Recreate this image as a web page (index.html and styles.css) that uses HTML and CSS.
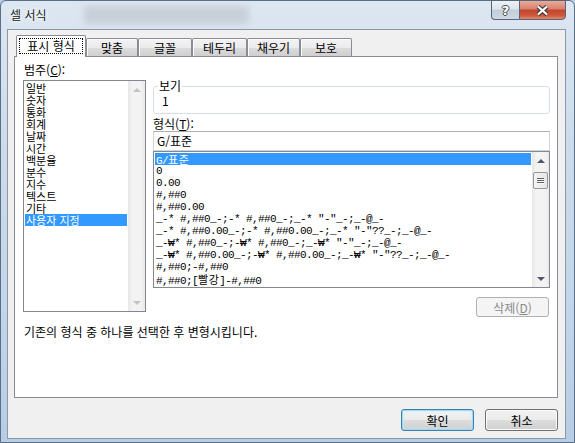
FILE: index.html
```html
<!DOCTYPE html>
<html lang="ko">
<head>
  <meta charset="UTF-8">
  <meta name="viewport" content="width=device-width, initial-scale=1.0">
  <title>셀 서식</title>
  <link rel="stylesheet" href="styles.css">
</head>
<body>
  <div class="window">
    <div class="titlebar">
      <span class="title">셀 서식</span>
      <span class="glass-blur"></span>
      <div class="caption-buttons">
        <span class="cap-btn help">?</span>
        <span class="cap-btn close">
          <svg width="13" height="11" viewBox="0 0 13 11">
            <path d="M2 1.5L11 9.5M11 1.5L2 9.5" stroke="#3d3d3d" stroke-width="4.4" fill="none"/>
            <path d="M2 1.5L11 9.5M11 1.5L2 9.5" stroke="#fff" stroke-width="2.2" fill="none"/>
          </svg>
        </span>
      </div>
    </div>

    <div class="client">
      <div class="tabs">
        <div class="tab active"><span class="focus">표시 형식</span></div>
        <div class="tab t52">맞춤</div>
        <div class="tab t54">글꼴</div>
        <div class="tab t55">테두리</div>
        <div class="tab t53">채우기</div>
        <div class="tab t52">보호</div>
      </div>

      <div class="panel">
        <div class="columns">
          <div class="category">
            <div class="label">범주(<u>C</u>):</div>
            <div class="listbox cat-list">
              <ul class="items">
                <li>일반</li>
                <li>숫자</li>
                <li>통화</li>
                <li>회계</li>
                <li>날짜</li>
                <li>시간</li>
                <li>백분율</li>
                <li>분수</li>
                <li>지수</li>
                <li>텍스트</li>
                <li>기타</li>
                <li class="selected">사용자 지정</li>
              </ul>
              <div class="scrollbar disabled">
                <span class="sb-btn"><span class="arrow up"></span></span>
                <span class="sb-fill"></span>
                <span class="sb-btn"><span class="arrow down"></span></span>
              </div>
            </div>
          </div>

          <div class="format">
            <fieldset class="sample">
              <legend>보기</legend>
              <div class="sample-value">1</div>
            </fieldset>
            <div class="label">형식(<u>T</u>):</div>
            <div class="textbox">G/표준</div>
            <div class="listbox fmt-list">
              <ul class="items mono">
                <li class="selected">G/<span class="ko">표준</span></li>
                <li>0</li>
                <li>0.00</li>
                <li>#,##0</li>
                <li>#,##0.00</li>
                <li>_-* #,##0_-;-* #,##0_-;_-* "-"_-;_-@_-</li>
                <li>_-* #,##0.00_-;-* #,##0.00_-;_-* "-"??_-;_-@_-</li>
                <li>_-₩* #,##0_-;-₩* #,##0_-;_-₩* "-"_-;_-@_-</li>
                <li>_-₩* #,##0.00_-;-₩* #,##0.00_-;_-₩* "-"??_-;_-@_-</li>
                <li>#,##0;-#,##0</li>
                <li>#,##0;[<span class="ko">빨강</span>]-#,##0</li>
              </ul>
              <div class="scrollbar">
                <span class="sb-btn"><span class="arrow up"></span></span>
                <span class="thumb"><span class="grip"></span></span>
                <span class="sb-fill"></span>
                <span class="sb-btn"><span class="arrow down"></span></span>
              </div>
            </div>
            <div class="actions">
              <button class="btn small" disabled>삭제(<u>D</u>)</button>
            </div>
          </div>
        </div>
        <p class="hint">기존의 형식 중 하나를 선택한 후 변형시킵니다.</p>
      </div>

      <div class="footer">
        <button class="btn default">확인</button>
        <button class="btn">취소</button>
      </div>
    </div>
  </div>
</body>
</html>
```

FILE: styles.css
```css
body {
  margin: 0;
  width: 575px;
  height: 443px;
  overflow: hidden;
  font-family: "Noto Sans CJK KR", "Noto Sans", sans-serif;
  font-size: 12px;
  color: #000;
  background: #b9cde4;
}

.window {
  box-sizing: border-box;
  width: 575px;
  height: 443px;
  border: 1px solid #5a6e85;
  border-radius: 6px 6px 0 0;
  background: linear-gradient(#dde7f2, #cddcec 30%, #c3d5e9 70%, #b7cce5);
  padding: 0 8px 3px 6px;
  display: flex;
  flex-direction: column;
}

/* title bar */
.titlebar {
  height: 28px;
  display: flex;
  align-items: flex-start;
}

.title {
  margin: 6px 0 0 3px;
  line-height: 16px;
  color: #1b1b1b;
  text-shadow: 0 0 6px #fff, 0 0 3px #fff;
}

.glass-blur {
  width: 165px;
  height: 18px;
  margin: 5px 0 0 38px;
  background: #c4cad2;
  filter: blur(3px);
  opacity: 0.8;
}

.caption-buttons {
  display: flex;
  margin: -1px 0 0 auto;
}

.cap-btn {
  box-sizing: border-box;
  height: 20px;
  border: 1px solid #56657a;
  display: flex;
  align-items: center;
  justify-content: center;
}

.help {
  width: 28px;
  border-right: none;
  border-radius: 0 0 0 4px;
  background: linear-gradient(#edf1f6, #dbe3ec 45%, #c3cedb 50%, #cdd8e4);
  font-family: "DejaVu Sans", sans-serif;
  font-weight: bold;
  font-size: 13px;
  color: #fff;
  text-shadow: 1px 0 #4a4a4a, -1px 0 #4a4a4a, 0 1px #4a4a4a, 0 -1px #4a4a4a;
}

.close {
  width: 47px;
  border-radius: 0 0 4px 0;
  background: linear-gradient(#e9ab9c, #d8806c 45%, #c4452b 50%, #d0573b 80%, #e28a6c);
}

/* client area */
.client {
  flex: 1;
  border: 1px solid #8b98a8;
  background: #f0f0f0;
  padding: 0 7px 0 6px;
  display: flex;
  flex-direction: column;
}

.tabs {
  display: flex;
  align-items: flex-end;
  height: 26px;
  padding-left: 2px;
}

.tab {
  box-sizing: border-box;
  height: 18px;
  border: 1px solid #898c95;
  border-bottom: none;
  border-radius: 2px 2px 0 0;
  background: linear-gradient(#f3f3f3, #ebebeb 50%, #dddddd 50%, #cfcfcf);
  box-shadow: inset 1px 1px 0 #fbfbfb;
  text-align: center;
  line-height: 17px;
}

.t52 { width: 52px; }
.t53 { width: 53px; }
.t54 { width: 54px; }
.t55 { width: 55px; }

.tab.active {
  width: 70px;
  height: 22px;
  margin-bottom: -1px;
  position: relative;
  z-index: 1;
  background: #fff;
  box-shadow: none;
  padding-top: 2px;
}

.focus {
  display: block;
  height: 16px;
  margin: 0 2px;
  border: 1px dotted #000;
  box-sizing: border-box;
  line-height: 14px;
}

.panel {
  box-sizing: border-box;
  height: 342px;
  border: 1px solid #898c95;
  background: #fff;
  padding: 6px 7px 0 8px;
}

.columns {
  display: flex;
  gap: 7px;
}

.category {
  width: 123px;
}

.format {
  flex: 1;
  min-width: 0;
}

.label {
  height: 14px;
  line-height: 14px;
  padding-left: 1px;
}

/* list boxes */
.listbox {
  box-sizing: border-box;
  border: 1px solid #828790;
  background: #fff;
  display: flex;
  overflow: hidden;
}

.cat-list {
  height: 232px;
  margin-top: 3px;
  font-size: 11px;
}

.items {
  flex: 1;
  min-width: 0;
  list-style: none;
  margin: 0;
  padding: 1px 1px 0 1px;
  overflow: hidden;
}

.items li {
  height: 12px;
  line-height: 12px;
  padding-left: 1px;
  white-space: nowrap;
}

.items li.selected {
  background: #3399ff;
  color: #fff;
}

.mono {
  font-family: "Liberation Mono", "DejaVu Sans Mono", monospace;
  font-size: 11px;
  letter-spacing: -0.6px;
}

.ko {
  font-family: "Noto Sans CJK KR", sans-serif;
  font-size: 11px;
  letter-spacing: 0.5px;
}

.scrollbar {
  width: 17px;
  display: flex;
  flex-direction: column;
  background: linear-gradient(to right, #e6e6e6, #f3f3f3 25%, #f3f3f3 75%, #e9e9e9);
}

.sb-btn {
  height: 17px;
  display: flex;
  align-items: center;
  justify-content: center;
}

.sb-fill {
  flex: 1;
}

.arrow {
  width: 0;
  height: 0;
  border-left: 4px solid transparent;
  border-right: 4px solid transparent;
}

.arrow.up { border-bottom: 4px solid #4f5866; }
.arrow.down { border-top: 4px solid #4f5866; }

.disabled .arrow.up { border-bottom-color: #c3c3c3; }
.disabled .arrow.down { border-top-color: #c3c3c3; }

.thumb {
  box-sizing: border-box;
  height: 17px;
  margin: 3px 1px 0;
  border: 1px solid #979797;
  border-radius: 2px;
  background: linear-gradient(to right, #f4f4f4, #e6e6e6);
  display: flex;
  align-items: center;
  justify-content: center;
}

.grip {
  width: 7px;
  height: 6px;
  background: repeating-linear-gradient(#5f5f5f 0 1px, #fafafa 1px 2px);
}

/* right column */
.sample {
  margin: 17px 0 0;
  padding: 3px 8px 6px;
  border: 1px solid #d5dfe5;
  border-radius: 3px;
  min-width: 0;
}

.sample legend {
  padding: 0 1px;
  margin-left: -4px;
  line-height: 12px;
}

.sample-value {
  line-height: 12px;
}

.format .label {
  margin-top: 3px;
  padding-left: 0;
}

.textbox {
  box-sizing: border-box;
  height: 20px;
  border: 1px solid #d0d4da;
  border-top-color: #abadb3;
  padding-left: 3px;
  line-height: 18px;
}

.fmt-list {
  height: 137px;
}

.actions {
  display: flex;
  justify-content: flex-end;
  margin-top: 9px;
  padding-right: 1px;
}

.hint {
  margin: 8px 0 0 1px;
  line-height: 14px;
}

/* buttons */
.btn {
  box-sizing: border-box;
  width: 73px;
  height: 22px;
  padding: 0;
  border: 1px solid #707070;
  border-radius: 3px;
  background: linear-gradient(#f2f2f2, #ebebeb 50%, #dddddd 51%, #cfcfcf);
  box-shadow: inset 0 0 0 1px #fbfbfb;
  font-family: "Noto Sans CJK KR", sans-serif;
  font-size: 12px;
  color: #000;
}

.btn.default {
  border-color: #3c7fb1;
  box-shadow: inset 0 0 0 1px #9adcf8, inset 0 0 2px 1px #c8ecfc;
}

.btn:disabled {
  height: 20px;
  border-color: #adb2b5;
  background: #f4f4f4;
  box-shadow: none;
  color: #8a8a8a;
}

.footer {
  display: flex;
  justify-content: flex-end;
  gap: 11px;
  padding-top: 11px;
}
```
